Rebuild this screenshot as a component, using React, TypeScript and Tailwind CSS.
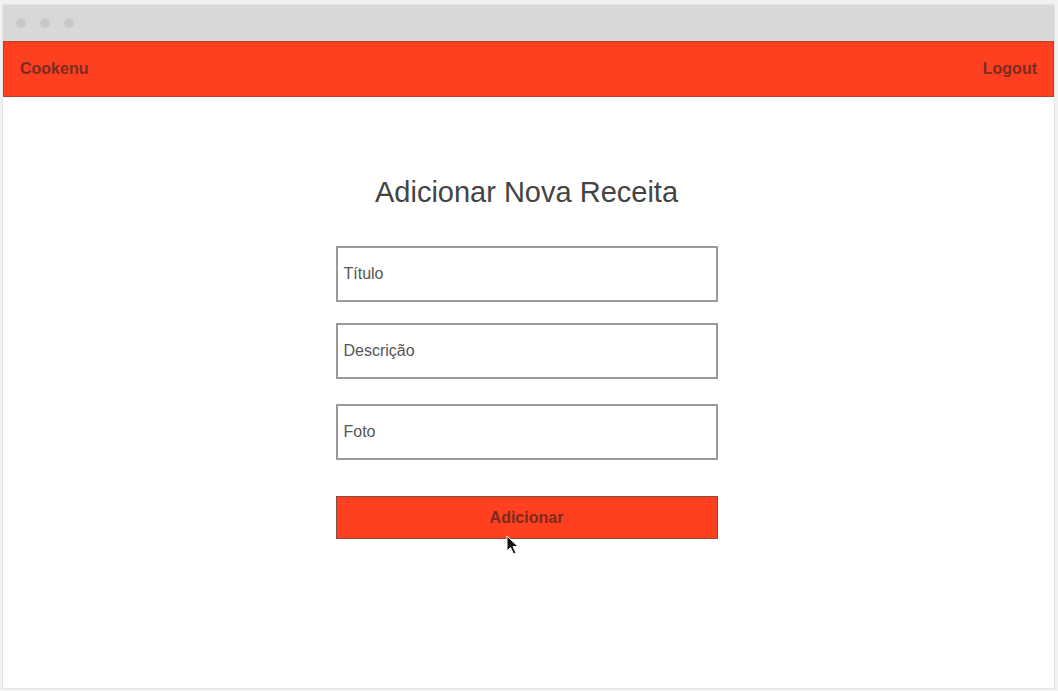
import React from "react";

function Field({ label }: { label: string }) {
  return (
    <div className="flex h-[56px] w-[382px] items-center border-2 border-[#9a9a9a] bg-white px-[6px] text-[16px] text-[#555]">
      {label}
    </div>
  );
}

export default function App() {
  return (
    <div className="h-[691px] w-[1058px] bg-[#f1f1f1] pl-[2px] pr-[3px] pt-[4px] pb-[2px] font-['Liberation_Sans',Arial,sans-serif]">
      <div className="flex h-full flex-col border border-[#e3e3e3] bg-white">
        <div className="flex h-[36px] items-center gap-[14px] bg-[#d8d8db] pl-[13px]">
          <span className="h-[10px] w-[10px] rounded-full bg-[#c9c9cc]" />
          <span className="h-[10px] w-[10px] rounded-full bg-[#c9c9cc]" />
          <span className="h-[10px] w-[10px] rounded-full bg-[#c9c9cc]" />
        </div>
        <header className="flex h-[56px] items-center justify-between border border-[#b8402c] bg-[#fe4021] px-[16px] text-[16px] font-bold text-[#7c2b1e]">
          <span>Cookenu</span>
          <span>Logout</span>
        </header>
        <main className="relative flex flex-col items-center pr-[4px] pt-[77px]">
          <h1 className="text-[29px] leading-[36px] text-[#444]">Adicionar Nova Receita</h1>
          <div className="mt-[36px] flex flex-col">
            <Field label="Título" />
            <div className="mt-[21px]">
              <Field label="Descrição" />
            </div>
            <div className="mt-[25px]">
              <Field label="Foto" />
            </div>
            <button className="relative mt-[36px] h-[43px] w-[382px] border border-[#8a4a3c] bg-[#fe4021] text-[16px] font-bold text-[#7c2b1e]">
              Adicionar
              <svg
                className="absolute left-[169px] top-[38px]"
                width="14"
                height="20"
                viewBox="0 0 14 20"
              >
                <path d="M1 1 L1 16 L4.5 12.5 L7.5 19 L10 18 L7 11.5 L12 11.5 Z" fill="#111" stroke="#fff" strokeWidth="1" />
              </svg>
            </button>
          </div>
        </main>
      </div>
    </div>
  );
}
